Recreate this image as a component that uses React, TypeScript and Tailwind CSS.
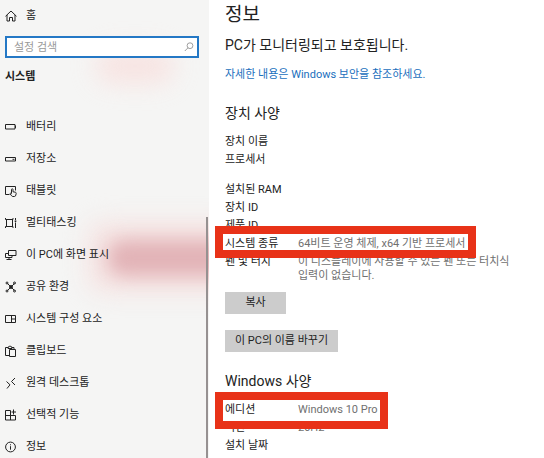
import type { ReactNode } from 'react';

interface NavItem {
  label: string;
  icon: ReactNode;
}

interface Spec {
  label: string;
  value?: string;
  mark?: string;
  gap?: boolean;
}

function Icon({ children }: { children: ReactNode }) {
  return (
    <svg
      viewBox="0 0 12 12"
      className="size-3 shrink-0"
      fill="none"
      stroke="currentColor"
      strokeWidth="1"
      aria-hidden="true"
    >
      {children}
    </svg>
  );
}

const navItems: NavItem[] = [
  {
    label: '배터리',
    icon: <path d="M.5 3.5h9.5v4.500H.5zM10.500 4.500v2.500" />,
  },
  {
    label: '저장소',
    icon: <path d="M.5 4.500h10v3.500H.5zM7.500 6.300h2" />,
  },
  {
    label: '태블릿',
    icon: (
      <>
        <path d="M4.500 9.500H.5v-8h10v4" />
        <path d="M6.500 8.500V4.500c0-1 1.500-1 1.500 0v2.300l2.300.4c.7.2 1 .6.9 1.200l-.4 1.700c-.2.900-.6 1.400-1.400 1.400H8c-.6 0-1-.2-1.400-.7L5 8.700c.5-.7 1.200-.5 1.500.2" />
      </>
    ),
  },
  {
    label: '멀티태스킹',
    icon: (
      <>
        <path d="M.5 1v1.500h7.500V1M.5 11V9.500h7.500V11M1.500 2.500v7M7.500 2.500v7" />
        <path d="M10.500 1v2M10.500 5.500V11" />
        <path d="M9.700 4.200h1.600" strokeWidth="1.600" />
      </>
    ),
  },
  {
    label: '이 PC에 화면 표시',
    icon: <path d="M3.500 1.500h7.500v5H3.500zM3.500 4.500H.5v4h6.500v-2M1.500 10.500h5M4 8.500v2" />,
  },
  {
    label: '공유 환경',
    icon: (
      <>
        <path d="M2.500 2.500l7 7M9.500 2.500l-7 7" />
        <circle cx="2" cy="2" r="1" />
        <circle cx="9.500" cy="2" r="1" />
        <circle cx="2" cy="10" r="1" />
        <circle cx="9.500" cy="10" r="1" />
        <circle cx="6" cy="6" r="1.400" fill="currentColor" />
      </>
    ),
  },
  {
    label: '시스템 구성 요소',
    icon: <path d="M.5 2.500h10v7H.5zM6.500 2.500v7M6.500 6h4" />,
  },
  {
    label: '클립보드',
    icon: (
      <>
        <path d="M4.500 10.500H.5v-8h2.500M7 2.500h2V4M3 3.500v-1.500h1C4 .7 6 .7 6 2h1v1.500z" />
        <path d="M4.500 4.500h6v7h-6z" />
      </>
    ),
  },
  {
    label: '원격 데스크톱',
    icon: <path d="M1.500 4.500l3.500 3.300L2 11.500M10 1L6.500 4.500l3.500 3.500" />,
  },
  {
    label: '선택적 기능',
    icon: <path d="M5.500 1.500h-5v9.500h10V6.500H.5M5.500 1.500V11M8.500.5v5M6.500 3h4.500" />,
  },
  {
    label: '정보',
    icon: (
      <>
        <circle cx="5.500" cy="6" r="4.900" />
        <path d="M5.500 5.200v3.500M5.500 3.300v1" />
      </>
    ),
  },
];

const deviceSpecs: Spec[] = [
  { label: '장치 이름' },
  { label: '프로세서' },
  { label: '설치된 RAM', gap: true },
  { label: '장치 ID' },
  { label: '제품 ID' },
  {
    label: '시스템 종류',
    value: '64비트 운영 체제, x64 기반 프로세서',
    mark: '-top-2 h-8 w-[261px]',
  },
  {
    label: '펜 및 터치',
    value: '이 디스플레이에 사용할 수 있는 펜 또는 터치식 입력이 없습니다.',
  },
];

const windowsSpecs: Spec[] = [
  { label: '에디션', value: 'Windows 10 Pro', mark: '-top-2 h-[37px] w-[173px]' },
  { label: '버전', value: '20H2' },
  { label: '설치 날짜' },
];

function SpecList({ specs }: { specs: Spec[] }) {
  return (
    <dl className="mt-[9px] text-[11px] leading-[14px]">
      {specs.map((spec) => (
        <div
          key={spec.label}
          className={`flex pt-[3px] pb-px ${spec.gap ? 'mt-3' : ''} ${spec.mark ? 'relative z-10' : ''}`}
        >
          <dt className="w-[73px] shrink-0">{spec.label}</dt>
          <dd className="max-w-[220px] text-[#707070]">{spec.value}</dd>
          {spec.mark && (
            <span className={`absolute -left-2.5 border-8 border-[#e83218] ${spec.mark}`} />
          )}
        </div>
      ))}
    </dl>
  );
}

function Sidebar() {
  return (
    <aside className="relative w-[209px] shrink-0 overflow-hidden bg-[#f5f5f4]">
      <div className="absolute top-12 left-[95px] h-9 w-20 rounded-full bg-[#f8e0de] opacity-80 blur-md" />
      <div className="absolute top-[222px] left-[88px] h-[70px] w-36 rounded-l-2xl bg-[#f5e2e1] blur-md" />
      <div className="absolute top-[240px] left-[108px] h-9 w-32 rounded-l-2xl bg-[#e2b3b7] blur-[9px]" />

      <div className="relative pr-2.5 pl-[5px]">
        <a href="#home" className="flex h-8 items-center gap-[9px] text-[11px]">
          <Icon>
            <path d="M.5 6.300L6 1l5.500 5.300M2 5v6h2.500V7.500h3V11H10V5" />
          </Icon>
          홈
        </a>
        <label className="mt-1 flex h-[22px] items-center border-2 border-[#2478c5] bg-white px-[7px]">
          <input
            type="text"
            placeholder="설정 검색"
            aria-label="설정 검색"
            className="min-w-0 flex-1 bg-transparent pt-px text-[11px] leading-4 outline-none placeholder:text-[#999]"
          />
          <svg
            viewBox="0 0 10 10"
            className="-mr-1 size-2.5 text-[#888]"
            fill="none"
            stroke="currentColor"
            strokeWidth="0.8"
            aria-hidden="true"
          >
            <circle cx="6" cy="3.700" r="2.900" />
            <path d="M4 5.800L.8 9" />
          </svg>
        </label>
        <h2 className="mt-[9px] mb-6 text-[11px] leading-5 font-bold">시스템</h2>
      </div>

      <nav aria-label="시스템" className="relative pl-[5px]">
        {navItems.map((item) => (
          <a
            key={item.label}
            href="#"
            className="flex h-8 items-center gap-[9px] text-[11px] leading-4"
          >
            <Icon>{item.icon}</Icon>
            {item.label}
          </a>
        ))}
      </nav>

      <div className="absolute top-[217px] right-px bottom-0 w-0.5 bg-[#969191]" />
    </aside>
  );
}

export default function App() {
  return (
    <div className="flex h-screen overflow-hidden bg-white font-['Roboto','Noto_Sans_CJK_KR',sans-serif] text-[#222]">
      <Sidebar />
      <main className="min-w-0 flex-1 pt-px pl-4">
        <h1 className="text-[19px] leading-7">정보</h1>
        <p className="mt-1.5 text-[14px] leading-5">PC가 모니터링되고 보호됩니다.</p>
        <a href="#security" className="mt-2.5 block text-[11px] leading-5 text-[#1a6fbd]">
          자세한 내용은 Windows 보안을 참조하세요.
        </a>
        <h2 className="mt-[18px] text-[14px] leading-5">장치 사양</h2>
        <SpecList specs={deviceSpecs} />
        <div className="mt-2 flex flex-col items-start gap-4 text-[11px]">
          <button type="button" className="h-[22px] w-[61px] bg-[#ccc] pt-px">
            복사
          </button>
          <button type="button" className="h-[22px] w-[113px] bg-[#ccc] pt-px">
            이 PC의 이름 바꾸기
          </button>
        </div>
        <h2 className="mt-[19px] text-[14px] leading-5">Windows 사양</h2>
        <SpecList specs={windowsSpecs} />
      </main>
    </div>
  );
}
